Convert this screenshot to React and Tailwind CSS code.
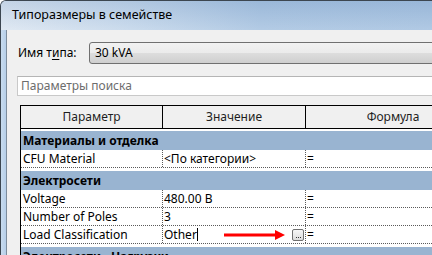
import React from "react";

const font = "font-['Noto_Sans',sans-serif]";

const Group = ({ title, first }) => (
    <div className={first ? "pt-[2px]" : "pt-[3px]"}>
        <div className="h-[19px] bg-[#99b4d1] pl-[2px] flex items-center font-bold text-black whitespace-nowrap">{title}</div>
    </div>
);

const Row = ({ name, children }) => (
    <div className="flex h-[18px] border-b border-dotted border-[#5a5a5a] text-black">
        <div className="w-[142px] pl-[2px] flex items-center border-r border-dotted border-[#5a5a5a]">{name}</div>
        <div className="w-[143px] pl-[1px] flex items-center border-r border-dotted border-[#5a5a5a] relative">{children}</div>
        <div className="flex-1 pl-[1px] flex items-center">=</div>
    </div>
);

export default function App() {
    return (
        <div className={`w-[432px] h-[255px] overflow-hidden bg-white ${font} text-[12px] leading-none`}>
            <div className="h-full border-l border-t border-[#3c4650] rounded-tl-[6px] overflow-hidden flex flex-col bg-[#bdd3ea]">
                {/* title bar */}
                <div className="h-[29px] shrink-0 flex items-center pl-[11px] text-black bg-[linear-gradient(180deg,rgba(90,130,180,0.18),rgba(255,255,255,0.12)),linear-gradient(90deg,#dce6f1_0%,#c3d6ea_30%,#a9c4e1_60%,#a6c2e0_100%)]">
                    <span className="text-[12.5px]">Типоразмеры в семействе</span>
                </div>

                <div className="flex flex-1 min-h-0">
                    {/* left frame */}
                    <div className="w-[5px] shrink-0 bg-[linear-gradient(90deg,#c9dcef,#b6cee8)]" />
                    <div className="flex-1 min-w-0 border-l border-[#7d8c9c] bg-[#f0f0f0] flex flex-col">
                        <div className="mt-[12px] h-[22px] flex items-center">
                            <span className="ml-[11px] w-[71px] shrink-0 whitespace-nowrap text-black">
                                Имя т<span className="underline underline-offset-2">и</span>па:
                            </span>
                            <div className="w-[400px] h-[22px] shrink-0 rounded-[3px] border border-[#707070] bg-[linear-gradient(180deg,#f2f2f2_0%,#ebebeb_50%,#dddddd_51%,#cfcfcf_100%)] flex items-center pl-[5px] text-black">
                                30 kVA
                            </div>
                        </div>

                        <div className="mt-[12px] ml-[10px] w-[440px] h-[20px] shrink-0 border border-[#c9c9c9] border-t-[#b5b5b5] bg-white flex items-center pl-[3px] text-[#6d6d6d]">
                            Параметры поиска
                        </div>

                        {/* table */}
                        <div className="mt-[9px] ml-[13px] w-[460px] flex-1 border-l border-t border-black bg-white">
                            <div className="flex h-[23px] border-b border-black bg-[#f0f0f0] text-[#1e1e1e]">
                                <div className="w-[142px] flex items-center justify-center border-r border-black">Параметр</div>
                                <div className="w-[143px] flex items-center justify-center border-r border-black">Значение</div>
                                <div className="flex-1 flex items-center justify-center">Формула</div>
                            </div>

                            <Group title="Материалы и отделка" first />
                            <Row name="CFU Material">&lt;По категории&gt;</Row>

                            <Group title="Электросети" />
                            <Row name="Voltage">480.00 В</Row>
                            <Row name="Number of Poles">3</Row>
                            <Row name="Load Classification">
                                <span>Other</span>
                                <span className="w-px h-[13px] bg-black" />
                                <svg className="absolute left-[61px] top-[4px]" width="62" height="10" viewBox="0 0 62 10">
                                    <rect x="0" y="3.5" width="52" height="3" fill="#ff0000" />
                                    <polygon points="51,0 61,5 51,10" fill="#ff0000" />
                                </svg>
                                <span className="ml-auto mr-[1px] w-[12px] h-[12px] rounded-[2px] border border-[#707070] bg-[linear-gradient(180deg,#f6f6f6,#dcdcdc)] flex items-end justify-center pb-[2px]">
                                    <span className="flex gap-px">
                                        <span className="w-px h-px bg-[#333]" />
                                        <span className="w-px h-px bg-[#333]" />
                                        <span className="w-px h-px bg-[#333]" />
                                    </span>
                                </span>
                            </Row>

                            <Group title="Электросети - Нагрузки" />
                        </div>
                    </div>
                </div>
            </div>
        </div>
    );
}
